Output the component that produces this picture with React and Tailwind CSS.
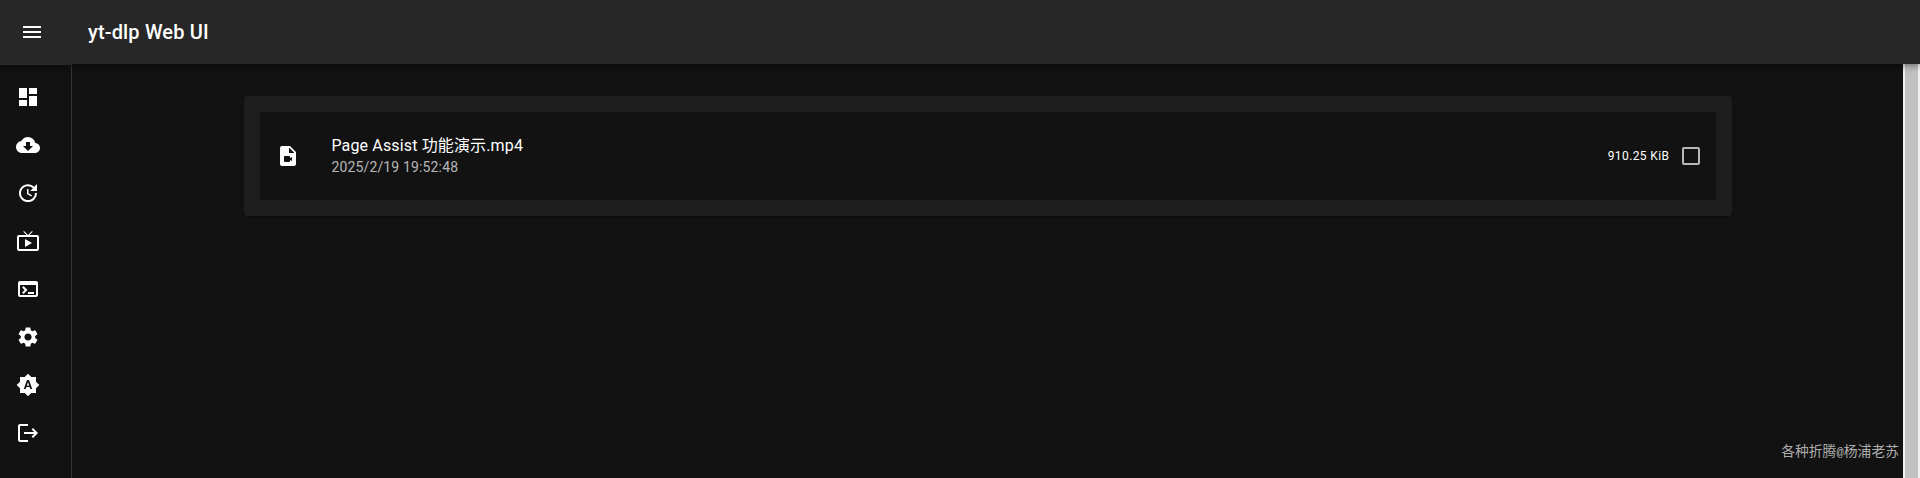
import {
  MdMenu,
  MdDashboard,
  MdCloudDownload,
  MdUpdate,
  MdLiveTv,
  MdTerminal,
  MdSettings,
  MdBrightnessAuto,
  MdLogout,
  MdVideoFile,
  MdCheckBoxOutlineBlank,
} from "react-icons/md";

const navItems = [
  { label: "Home", Icon: MdDashboard },
  { label: "Archive", Icon: MdCloudDownload },
  { label: "Subscriptions", Icon: MdUpdate },
  { label: "Live streams", Icon: MdLiveTv },
  { label: "Logs", Icon: MdTerminal },
  { label: "Settings", Icon: MdSettings },
  { label: "Theme", Icon: MdBrightnessAuto },
  { label: "Log out", Icon: MdLogout },
];

function TopBar() {
  return (
    <header className="relative z-10 flex h-16 shrink-0 items-center bg-[#272727] px-5 shadow-[0_2px_4px_-1px_rgba(0,0,0,0.2),0_4px_5px_0_rgba(0,0,0,0.14),0_1px_10px_0_rgba(0,0,0,0.12)]">
      <button aria-label="Menu" className="mr-11">
        <MdMenu size={24} />
      </button>
      <h1 className="text-xl font-medium leading-8 tracking-[0.0075em]">yt-dlp Web UI</h1>
    </header>
  );
}

function Sidebar() {
  return (
    <nav className="flex w-[72px] shrink-0 flex-col border-r border-t border-r-[#333333] border-t-[#3a3a3a] pt-2">
      {navItems.map(({ label, Icon }) => (
        <a key={label} aria-label={label} className="flex h-12 items-center px-4">
          <Icon size={24} />
        </a>
      ))}
    </nav>
  );
}

function FileRow({ name, date, size }) {
  return (
    <li className="flex h-[88px] items-center bg-[#121212] pl-4 pr-[13px]">
      <MdVideoFile size={24} className="mr-[31.4px] shrink-0" />
      <div className="flex-1 pb-px">
        <p className="text-base leading-6 tracking-[0.00938em]">{name}</p>
        <p className="-mt-px text-sm leading-5 tracking-[0.01071em] text-white/70">{date}</p>
      </div>
      <span className="mr-[9.5px] text-xs leading-5 tracking-[0.03333em]">{size}</span>
      <MdCheckBoxOutlineBlank size={24} className="text-white/70" />
    </li>
  );
}

export default function App() {
  return (
    <div className="relative flex h-[478px] flex-col overflow-hidden bg-[#121212] font-[Roboto,'Noto_Sans_CJK_SC',sans-serif] text-white">
      <TopBar />
      <div className="flex flex-1">
        <Sidebar />
        <main className="flex-1 pl-[172px] pt-8">
          <ul className="w-[1488px] rounded bg-[#1e1e1e] p-4 shadow-[0_2px_1px_-1px_rgba(0,0,0,0.2),0_1px_1px_0_rgba(0,0,0,0.14),0_1px_3px_0_rgba(0,0,0,0.12)]">
            <FileRow name="Page Assist 功能演示.mp4" date="2025/2/19 19:52:48" size="910.25 KiB" />
          </ul>
        </main>
        <div className="w-[17px] bg-[#f1f1f1] pl-[2px] pr-[2px]">
          <div className="h-full bg-[#c1c1c1]" />
        </div>
      </div>
      <div className="absolute bottom-[18px] right-[21px] flex h-5 items-baseline font-['Noto_Sans_CJK_SC',sans-serif] text-[13.8px] leading-5 text-[#adadad]">
        <span>各种折腾</span>
        <span className="flex w-[7.5px] justify-center font-['Liberation_Mono',monospace] text-xs">@</span>
        <span>杨浦老苏</span>
      </div>
    </div>
  );
}
